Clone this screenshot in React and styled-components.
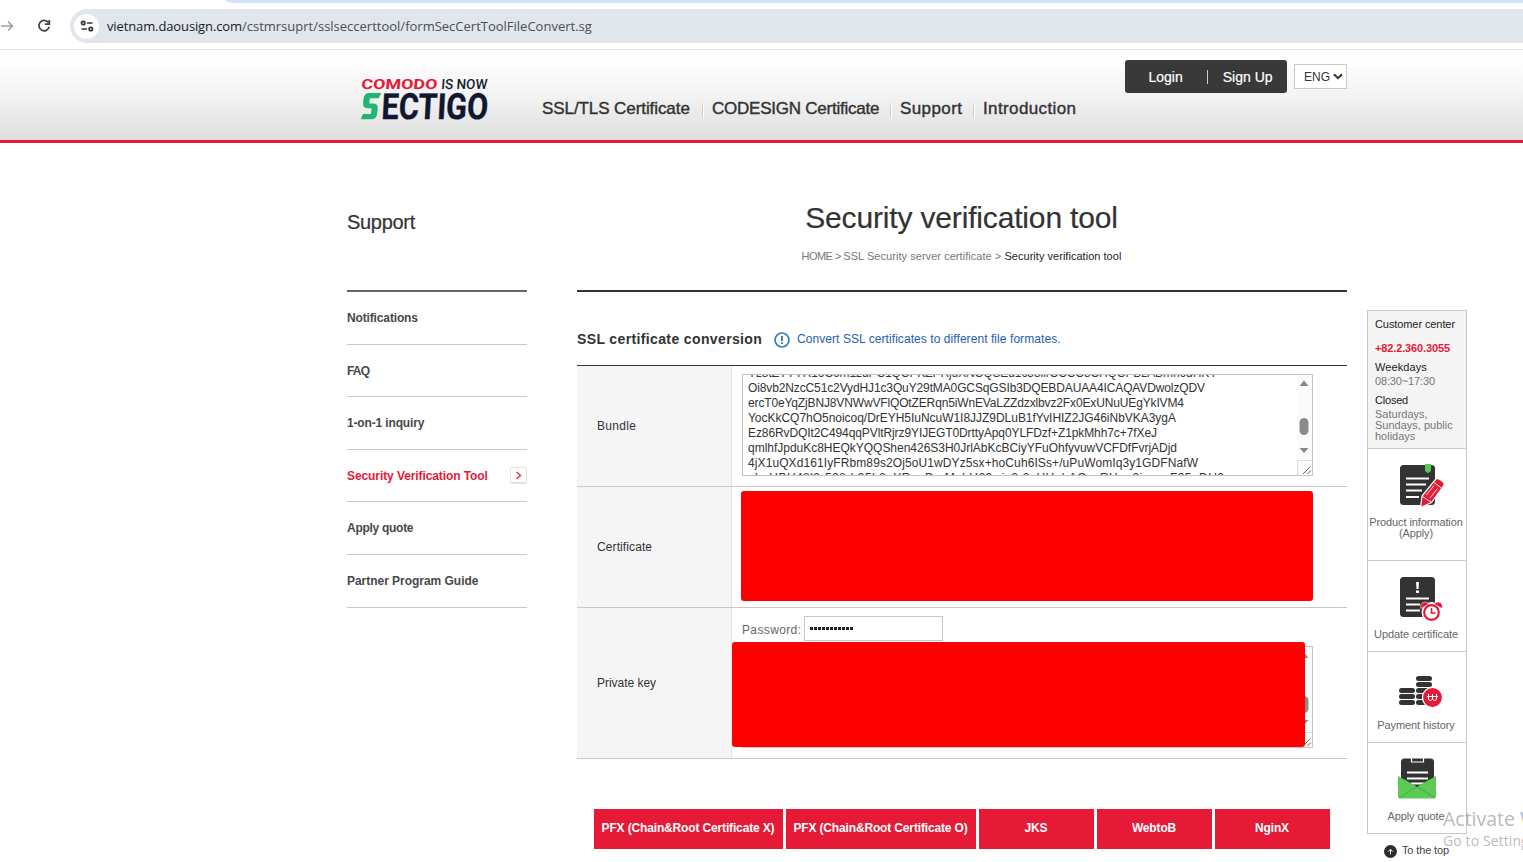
import React from 'react';
import styled, { createGlobalStyle } from 'styled-components';

const GlobalStyle = createGlobalStyle`
  *, *::before, *::after { box-sizing: border-box; }
  html, body { margin: 0; height: 862px; overflow: hidden; background: #fff; }
  body { font-family: "Liberation Sans", Arial, sans-serif; font-size: 12px; color: #333; }
  a { color: inherit; text-decoration: none; }
`;

const Page = styled.div`
  position: relative;
  height: 862px;
  overflow: hidden;
`;

/* Browser chrome */
const TabStrip = styled.div`
  height: 3px;
  margin-left: 226px;
  background: #d3e3fd;
  border-bottom-left-radius: 8px 3px;
`;
const Toolbar = styled.div`
  display: flex;
  align-items: flex-start;
  height: 47px;
  padding-top: 6px;
  border-bottom: 1px solid #dfe1e5;
`;
const ToolIcon = styled.svg`
  flex: none;
  margin: ${(p) => p.$m};
`;
const AddressBar = styled.div`
  display: flex;
  align-items: center;
  flex: 1;
  height: 34px;
  padding-left: 4px;
  border-radius: 17px 0 0 17px;
  background: #e1e5ec;
`;
const SiteInfo = styled.span`
  display: flex;
  align-items: center;
  justify-content: center;
  width: 25px;
  height: 25px;
  margin-right: 8px;
  border-radius: 50%;
  background: #fff;
`;
const Url = styled.span`
  font: 13px/20px "Open Sans", sans-serif;
  color: #4b4e52;
  white-space: pre;
  b { font-weight: 400; color: #202124; letter-spacing: -0.12px; }
`;

/* Site header */
const Header = styled.header`
  height: 93px;
  border-bottom: 3px solid #e61937;
  background: linear-gradient(#fff 8%, #f3f3f3 50%, #dedede);
`;
const HeaderInner = styled.div`
  display: flex;
  width: 1000px;
  margin-left: 347px;
`;
const Logo = styled.svg`
  flex: none;
  margin: 26px 0 0 13px;
`;
const Nav = styled.nav`
  display: flex;
  margin: 49px 0 0 47px;
  width: 586px;
`;
const NavItem = styled.a`
  height: 20px;
  font-size: 17px;
  line-height: 20px;
  white-space: nowrap;
  -webkit-text-stroke: 0.4px #333;
  letter-spacing: ${(p) => p.$ls}px;
  width: ${(p) => p.$w}px;
`;
const NavSeparator = styled.i`
  width: 2px;
  height: 15px;
  margin: 4px 8px 0 0;
  background: linear-gradient(90deg, #ccc 50%, #fff 50%);
`;
const UserBox = styled.div`
  display: flex;
  align-items: center;
  flex: none;
  width: 162px;
  height: 33px;
  margin: 10px 7px 0 -3px;
  padding-left: 23.5px;
  border-radius: 3px;
  background: #393939;
  color: #fff;
  font-size: 14px;
  -webkit-text-stroke: 0.2px #fff;
`;
const UserDivider = styled.i`
  width: 1px;
  height: 14px;
  margin: 0 15px 0 24px;
  background: #ccc;
`;
const LanguageSelect = styled.div`
  display: flex;
  align-items: center;
  justify-content: space-between;
  flex: none;
  width: 53px;
  height: 25px;
  margin-top: 14px;
  padding: 0 3px 0 9px;
  border: 1px solid #c8c8c8;
  background: #fff;
  font-size: 12px;
`;

/* Body */
const Body = styled.div`
  display: flex;
  width: 1120px;
  margin-left: 347px;
`;
const SideMenu = styled.aside`
  width: 180px;
  margin-right: 50px;
`;
const SideTitle = styled.h2`
  height: 149px;
  margin: 0;
  padding-top: 67px;
  border-bottom: 2px solid #666;
  font-size: 20px;
  font-weight: 400;
  line-height: 24px;
  letter-spacing: -0.3px;
  color: #333;
  -webkit-text-stroke: 0.2px #333;
`;
const SideItem = styled.a`
  display: flex;
  align-items: center;
  justify-content: space-between;
  height: ${(p) => p.$h}px;
  border-bottom: 1px solid #c8c8c8;
  font-weight: 700;
  letter-spacing: ${(p) => p.$ls}px;
  color: ${(p) => (p.$active ? '#e61937' : '#484848')};
`;
const ArrowBox = styled.span`
  display: flex;
  align-items: center;
  justify-content: center;
  width: 17px;
  height: 17px;
  border: 1px solid #e2e2e2;
  border-bottom-width: 2px;
  border-radius: 2px;
`;

const Main = styled.main`
  width: 770px;
`;
const TitleArea = styled.div`
  height: 149px;
  border-bottom: 2px solid #333;
  text-align: center;
`;
const PageTitle = styled.h1`
  margin: 0 1px 0 0;
  padding-top: 57px;
  font-size: 30px;
  font-weight: 400;
  line-height: 36px;
  letter-spacing: -0.16px;
  -webkit-text-stroke: 0.2px #333;
`;
const Breadcrumb = styled.div`
  margin: 13px 1px 0 0;
  font-size: 11px;
  line-height: 15px;
  letter-spacing: 0.05px;
  color: #777;
  b { font-weight: 400; letter-spacing: 0.03px; color: #222; }
`;
const BreadcrumbHome = styled.span`
  letter-spacing: -0.55px;
`;
const SectionHead = styled.div`
  display: flex;
  align-items: center;
  height: 73px;
  padding-top: 21px;
  white-space: nowrap;
`;
const SectionTitle = styled.h3`
  margin: 0;
  width: 197px;
  font-size: 14px;
  letter-spacing: 0.37px;
`;
const HintIcon = styled.svg`
  flex: none;
  margin-top: 2px;
`;
const Hint = styled.span`
  margin-left: 7px;
  letter-spacing: 0.067px;
  color: #2560b2;
`;
const FormTable = styled.div`
  border-top: 1px solid #333;
`;
const FormRow = styled.div`
  display: flex;
  height: ${(p) => p.$h}px;
  border-bottom: 1px solid #c8c8c8;
`;
const FormLabel = styled.div`
  display: flex;
  align-items: center;
  flex: none;
  width: 155px;
  padding-left: 20px;
  border-right: 1px solid #e5e5e5;
  background: #f5f5f5;
  letter-spacing: ${(p) => p.$ls}px;
`;
const FormCell = styled.div`
  position: relative;
  flex: 1;
  padding: 8px 0 0 10px;
`;
const TextBox = styled.div`
  display: flex;
  width: 571px;
  height: 102px;
  border: 1px solid #c4c4c4;
  background: #fff;
`;
const TextLines = styled.div`
  flex: 1;
  display: flex;
  flex-direction: column;
  justify-content: center;
  overflow: hidden;
  padding-left: 5px;
`;
const TextLine = styled.div`
  flex: none;
  height: 15px;
  line-height: 16px;
  white-space: nowrap;
  letter-spacing: ${(p) => p.$ls}px;
`;
const Scrollbar = styled.svg`
  flex: none;
`;
const PasswordLine = styled.div`
  display: flex;
  align-items: center;
  height: 25px;
  margin-bottom: 5px;
  color: #666;
  letter-spacing: 0.37px;
`;
const PasswordLabel = styled.span`
  padding-top: 2px;
`;
const PasswordField = styled.div`
  display: flex;
  align-items: center;
  gap: 1px;
  width: 139px;
  height: 25px;
  margin-left: 2.4px;
  padding-left: 5px;
  border: 1px solid #c8c8c8;
`;
const Dot = styled.i`
  width: 3px;
  height: 3px;
  background: #222;
`;
const Redaction = styled.div`
  position: absolute;
  left: ${(p) => p.$x}px;
  top: ${(p) => p.$y}px;
  width: ${(p) => p.$w}px;
  height: ${(p) => p.$h}px;
  border-radius: 3px;
  background: #f00;
`;
const Actions = styled.div`
  display: flex;
  gap: 3px;
  margin: 50px 0 0 17px;
`;
const ActionButton = styled.button`
  width: ${(p) => p.$w}px;
  height: 40px;
  padding: 0 1px 3px 0;
  border: 0;
  background: #e61937;
  color: #fff;
  font: 700 12px "Liberation Sans", Arial, sans-serif;
  letter-spacing: -0.15px;
  white-space: nowrap;
`;

/* Quick panel */
const Quick = styled.aside`
  width: 100px;
  margin: 167px 0 0 20px;
`;
const QuickBox = styled.div`
  border: 1px solid #c8c8c8;
`;
const Contact = styled.div`
  height: 137px;
  padding: 7px 0 0 7px;
  background: #f4f4f4;
  font-size: 11px;
  line-height: 13px;
`;
const ContactLine = styled.div`
  height: ${(p) => p.$h}px;
  line-height: ${(p) => p.$lh || 13}px;
  color: ${(p) => p.$c || '#222'};
  font-weight: ${(p) => (p.$bold ? 700 : 400)};
  letter-spacing: ${(p) => p.$ls || 0}px;
  white-space: pre-line;
`;
const QuickItem = styled.a`
  display: block;
  height: ${(p) => p.$h}px;
  padding: ${(p) => p.$pt}px 2px 0 0;
  border-top: 1px solid #c8c8c8;
  text-align: center;
  color: #666;
  font-size: 11px;
  line-height: 11px;
  letter-spacing: -0.1px;
  white-space: nowrap;
  svg { display: block; margin: 0 0 ${(p) => p.$gap}px 30px; }
`;
const ToTop = styled.a`
  display: flex;
  align-items: center;
  height: 34px;
  padding-left: 17px;
  gap: 5px;
  font-size: 11px;
  letter-spacing: -0.13px;
  color: #444;
`;
const ToTopLabel = styled.span`
  padding-bottom: 2px;
`;

const Watermark = styled.div`
  position: absolute;
  left: 1443px;
  top: 805px;
  width: 80px;
  overflow: hidden;
  white-space: nowrap;
  font-family: "Open Sans", sans-serif;
  color: rgba(140, 140, 140, 0.62);
`;
const WatermarkTitle = styled.div`
  font-size: 19.5px;
  line-height: 27px;
`;
const WatermarkText = styled.div`
  font-size: 14px;
  line-height: 18px;
  letter-spacing: 0.1px;
`;

const NAV = [
  ['SSL/TLS Certificate', -0.08, 160],
  ['CODESIGN Certificate', -0.24, 178],
  ['Support', 0.4, 73],
  ['Introduction', 0.38, 94],
];
const MENU = [
  ['Notifications', 53, -0.14],
  ['FAQ', 52, -0.8],
  ['1-on-1 inquiry', 53, -0.15],
  ['Security Verification Tool', 52, -0.09],
  ['Apply quote', 53, -0.28],
  ['Partner Program Guide', 53, -0.03],
];
const BUNDLE = [
  ['Yz8tZYYYR16C6m1zdPC1QCPKZPRjuXNCQSEd1c38iirCCCC8CHQCPBzABmh6dHKY', -0.09],
  ['Oi8vb2NzcC51c2VydHJ1c3QuY29tMA0GCSqGSIb3DQEBDAUAA4ICAQAVDwolzQDV', -0.124],
  ['ercT0eYqZjBNJ8VNWwVFlQOtZERqn5iWnEVaLZZdzxlbvz2Fx0ExUNuUEgYkIVM4', -0.14],
  ['YocKkCQ7hO5noicoq/DrEYH5IuNcuW1I8JJZ9DLuB1fYvIHIZ2JG46iNbVKA3ygA', -0.028],
  ['Ez86RvDQIt2C494qqPVltRjrz9YIJEGT0DrttyApq0YLFDzf+Z1pkMhh7c+7fXeJ', -0.093],
  ['qmlhfJpduKc8HEQkYQQShen426S3H0JrlAbKcBCiyYFuOhfyvuwVCFDfFvrjADjd', -0.018],
  ['4jX1uQXd161IyFRbm89s2Oj5oU1wDYz5sx+hoCuh6ISs+/uPuWomIq3y1GDFNafW', 0.096],
  ['nbeHBH48l2r528rb35h2uYRaoDmMgbH69wiz2r2xHHqbACqyRHuu2jvmmF35pDU2', 0.44],
];
const ACTIONS = [
  ['PFX (Chain&Root Certificate X)', 189],
  ['PFX (Chain&Root Certificate O)', 190],
  ['JKS', 115],
  ['WebtoB', 115],
  ['NginX', 115],
];

const BoxScrollbar = ({ thumb }) => (
  <Scrollbar width="15" height="100" viewBox="0 0 15 100">
    <rect width="15" height="100" fill="#fbfbfb" />
    <path d="M7 5.500l4.500 5.500h-9zM7 78l4.500-5h-9z" fill="#858585" />
    <rect x="2.500" y={thumb} width="9" height="17" rx="4.500" fill="#8b8b8b" />
    <path d="M0 85.500h15M.5 85v15" stroke="#dcdcdc" fill="none" />
    <path d="M6 99l7.500-7.500M10.500 99l3.500-3.500" stroke="#666" fill="none" />
  </Scrollbar>
);

const LogoMark = () => (
  <Logo width="135" height="54" viewBox="0 0 135 54">
    <g fontFamily="Roboto, sans-serif" fontWeight="700">
      <text transform="translate(1 13.200) skewX(-5)" fontSize="14" fill="#e61937" textLength="76" lengthAdjust="spacingAndGlyphs">COMODO</text>
      <text transform="translate(81 13.200) skewX(-4)" fontSize="14" fontWeight="500" fill="#141c30" textLength="46" lengthAdjust="spacingAndGlyphs">IS NOW</text>
      <text transform="translate(21 43) skewX(-3)" fontSize="36" fill="#10172f" stroke="#10172f" strokeWidth=".4" textLength="106.500" lengthAdjust="spacingAndGlyphs">ECTIGO</text>
    </g>
    <path d="M21.200 17H9.500q-5.300 0-5.900 5.200l-.5 4.800q-.4 5.200 4.400 5.200h4l-.5 5.800H3L.8 43.300H11q5.500 0 6.100-5.300l.6-5.500q.4-5-4.500-5H9.300l.5-5.200h9z" fill="#1fb573" />
  </Logo>
);

const ApplyIcon = () => (
  <svg width="48" height="46" viewBox="0 0 48 46">
    <rect x="2" y="2" width="35" height="40" rx="3.500" fill="#333" />
    <path d="M27 1h6v7l-3 2.300-3-2.300z" fill="#56c755" />
    <path d="M8 15.500h23M8 21.500h20M8 27.500h16M8 34h13" stroke="#fff" strokeWidth="2" />
    <path d="M22.500 44.500L24 33 37 17q2-2.500 4.500-.8l3.500 2.500q2.300 2 .5 4.500L33.500 39.500z" fill="#e61937" stroke="#fff" strokeWidth="1.200" />
    <path d="M24.500 33.500l8.500 5.500M36 19.500l8 6M28.500 32l7.500-9.500M32 35l7.500-9.500" stroke="#fff" strokeWidth=".9" fill="none" />
  </svg>
);
const UpdateIcon = () => (
  <svg width="48" height="46" viewBox="0 0 48 46">
    <rect x="2" y="2" width="35" height="40" rx="3.500" fill="#333" />
    <path d="M18 7h3l-.5 7h-2zM18 15.500h3v2.500h-3zM8 22.500h23v2H8zM8 28.500h14v2H8zM8 34.500h14v2H8z" fill="#fff" />
    <circle cx="33.500" cy="37" r="10" fill="#fff" />
    <path d="M22.800 33.500q-.8-6 3.700-6.500 3.500-.2 4 2.200zM44.200 33.500q.8-6-3.700-6.500-3.500-.2-4 2.200z" fill="#e61937" stroke="#fff" strokeWidth=".5" />
    <circle cx="33.500" cy="37.500" r="8.500" fill="#fff" />
    <circle cx="33.500" cy="37.500" r="7.300" fill="#fff" stroke="#e61937" strokeWidth="2.200" />
    <path d="M33.500 33v5h4" stroke="#e61937" strokeWidth="1.600" fill="none" />
  </svg>
);
const PaymentIcon = () => (
  <svg width="48" height="36" viewBox="0 0 48 36">
    <g fill="#333">
      <rect x="18" y="2" width="16" height="5" rx="2.500" />
      <rect x="18" y="8" width="16" height="5" rx="2.500" />
      <rect x="18" y="14" width="16" height="5" rx="2.500" />
      <rect x="18" y="20" width="16" height="5" rx="2.500" />
      <rect x="18" y="26" width="16" height="5" rx="2.500" />
      <rect x="1" y="14" width="16" height="5" rx="2.500" />
      <rect x="1" y="20" width="16" height="5" rx="2.500" />
      <rect x="1" y="26" width="16" height="5" rx="2.500" />
    </g>
    <circle cx="34.500" cy="23.500" r="10" fill="#e61937" stroke="#fff" strokeWidth="1.200" />
    <path d="M30.500 20v5l1 1.500h1.500l1.500-1.500v-5 5l1.500 1.500h1.500l1-1.500v-5M29 22.500h11" stroke="#fff" fill="none" />
  </svg>
);
const QuoteIcon = () => (
  <svg width="48" height="44" viewBox="0 0 48 44">
    <path d="M3 22V5q0-3.500 3.500-3.500h26Q36 1.500 36 5v17L20 31z" fill="#333" />
    <path d="M13.500 1v4h12V1" stroke="#fff" strokeWidth="1.200" fill="none" />
    <path d="M9 15.500h21M9 21.500h21M13 26.500h13" stroke="#fff" strokeWidth="2" fill="none" />
    <path d="M0 19l19 10.500L38 19v20q0 2.500-2.500 2.500h-33Q0 41.500 0 39z" fill="#5bcb56" />
    <path d="M1 41l18-11.500L37 41" stroke="#40963d" strokeWidth=".7" fill="none" />
    <path d="M17 28.500l2 1.500 2-1.500z" fill="#333" />
  </svg>
);

export default function App() {
  return (
    <Page>
      <GlobalStyle />
      <TabStrip />
      <Toolbar>
        <ToolIcon $m="10px 0 0 0" width="14" height="14" viewBox="0 0 14 14">
          <path d="M1 7h12M8 2.500l4.500 4.500L8 11.500" fill="none" stroke="#a0a0a0" strokeWidth="1.500" />
        </ToolIcon>
        <ToolIcon $m="9px 18px 0 22px" width="16" height="16" viewBox="0 0 16 16">
          <path d="M12.300 4.500A5.200 5.200 0 1 0 13.200 8.800M13.300 2v4.200H9" fill="none" stroke="#444" strokeWidth="1.800" />
        </ToolIcon>
        <AddressBar>
          <SiteInfo>
            <svg width="14" height="12" viewBox="0 0 14 12" fill="none" stroke="#333" strokeWidth="1.700">
              <circle cx="3.200" cy="3" r="1.700" />
              <path d="M7 3h5.500M1.500 9H7" />
              <circle cx="10.800" cy="9" r="1.700" />
            </svg>
          </SiteInfo>
          <Url><b>vietnam.daousign.com</b>/cstmrsuprt/sslseccerttool/formSecCertToolFileConvert.sg</Url>
        </AddressBar>
      </Toolbar>

      <Header>
        <HeaderInner>
          <LogoMark />
          <Nav>
            {NAV.map(([label, ls, w], i) => (
              <React.Fragment key={label}>
                {i > 0 && <NavSeparator />}
                <NavItem href="#" $ls={ls} $w={w}>{label}</NavItem>
              </React.Fragment>
            ))}
          </Nav>
          <UserBox>
            <span>Login</span>
            <UserDivider />
            <span>Sign Up</span>
          </UserBox>
          <LanguageSelect>
            ENG
            <svg width="10" height="7" viewBox="0 0 10 7"><path d="M1 1.200l4 4 4-4" fill="none" stroke="#333" strokeWidth="2" /></svg>
          </LanguageSelect>
        </HeaderInner>
      </Header>

      <Body>
        <SideMenu>
          <SideTitle>Support</SideTitle>
          {MENU.map(([label, h, ls], i) => (
            <SideItem key={label} href="#" $h={h} $ls={ls} $active={i === 3}>
              {label}
              {i === 3 && (
                <ArrowBox>
                  <svg width="7" height="9" viewBox="0 0 7 9"><path d="M1.500 1l4 3.500-4 3.500" fill="none" stroke="#dd3850" strokeWidth="1.500" /></svg>
                </ArrowBox>
              )}
            </SideItem>
          ))}
        </SideMenu>

        <Main>
          <TitleArea>
            <PageTitle>Security verification tool</PageTitle>
            <Breadcrumb><BreadcrumbHome>HOME &gt; </BreadcrumbHome>SSL Security server certificate &gt; <b>Security verification tool</b></Breadcrumb>
          </TitleArea>
          <SectionHead>
            <SectionTitle>SSL certificate conversion</SectionTitle>
            <HintIcon width="16" height="16" viewBox="0 0 16 16">
              <circle cx="8" cy="8" r="7" fill="none" stroke="#3480c2" strokeWidth="1.700" />
              <path d="M8 4v5M8 10.300v1.800" stroke="#2d6fb5" strokeWidth="1.800" />
            </HintIcon>
            <Hint>Convert SSL certificates to different file formates.</Hint>
          </SectionHead>
          <FormTable>
            <FormRow $h={121}>
              <FormLabel $ls={0.3}>Bundle</FormLabel>
              <FormCell>
                <TextBox>
                  <TextLines>
                    {BUNDLE.map(([line, ls]) => <TextLine key={line} $ls={ls}>{line}</TextLine>)}
                  </TextLines>
                  <BoxScrollbar thumb={43} />
                </TextBox>
              </FormCell>
            </FormRow>
            <FormRow $h={121}>
              <FormLabel $ls={0.1}>Certificate</FormLabel>
              <FormCell>
                <Redaction $x={9} $y={4} $w={572} $h={110} />
              </FormCell>
            </FormRow>
            <FormRow $h={151}>
              <FormLabel $ls={-0.03}>Private key</FormLabel>
              <FormCell>
                <PasswordLine>
                  <PasswordLabel>Password:</PasswordLabel>
                  <PasswordField>
                    {Array.from({ length: 11 }, (_, i) => <Dot key={i} />)}
                  </PasswordField>
                </PasswordLine>
                <TextBox>
                  <TextLines />
                  <BoxScrollbar thumb={49} />
                </TextBox>
                <Redaction $x={0} $y={34} $w={573} $h={105} />
              </FormCell>
            </FormRow>
          </FormTable>
          <Actions>
            {ACTIONS.map(([label, w]) => <ActionButton key={label} $w={w}>{label}</ActionButton>)}
          </Actions>
        </Main>

        <Quick>
          <QuickBox>
            <Contact>
              <ContactLine $h={24} $ls={-0.09}>Customer center</ContactLine>
              <ContactLine $h={19} $c="#e61937" $bold $ls={-0.13}>+82.2.360.3055</ContactLine>
              <ContactLine $h={14} $ls={0.1}>Weekdays</ContactLine>
              <ContactLine $h={19} $c="#777" $ls={-0.14}>08:30~17:30</ContactLine>
              <ContactLine $h={15} $ls={-0.2}>Closed</ContactLine>
              <ContactLine $h={33} $lh={11} $c="#777">{'Saturdays,\nSundays, public\nholidays'}</ContactLine>
            </Contact>
            <QuickItem href="#" $h={112} $pt={14} $gap={8}><ApplyIcon />Product information<br />(Apply)</QuickItem>
            <QuickItem href="#" $h={91} $pt={14} $gap={8}><UpdateIcon />Update certificate</QuickItem>
            <QuickItem href="#" $h={91} $pt={22} $gap={10}><PaymentIcon />Payment history</QuickItem>
            <QuickItem href="#" $h={91} $pt={14} $gap={10}><QuoteIcon />Apply quote</QuickItem>
          </QuickBox>
          <ToTop href="#">
            <svg width="13" height="13" viewBox="0 0 13 13">
              <circle cx="6.500" cy="6.500" r="6.500" fill="#2e2e2e" />
              <path d="M6.500 9.500v-5M4.300 6.500l2.200-2.200 2.200 2.200" stroke="#fff" fill="none" />
            </svg>
            <ToTopLabel>To the top</ToTopLabel>
          </ToTop>
        </Quick>
      </Body>

      <Watermark>
        <WatermarkTitle>Activate Windows</WatermarkTitle>
        <WatermarkText>Go to Settings to activate Windows.</WatermarkText>
      </Watermark>
    </Page>
  );
}
